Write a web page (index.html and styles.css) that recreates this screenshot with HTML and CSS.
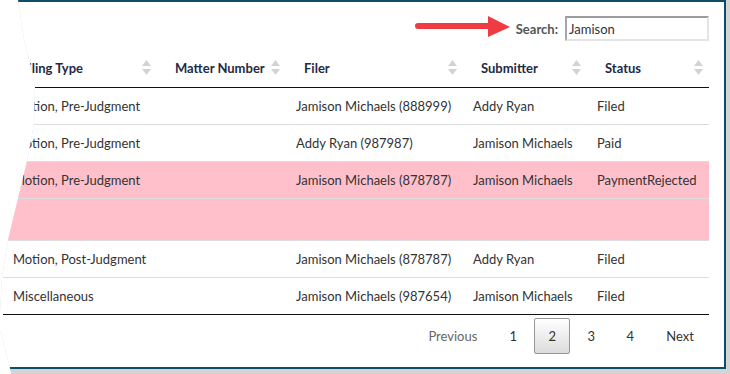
FILE: index.html
```html
<!DOCTYPE html>
<html lang="en">
<head>
    <meta charset="UTF-8">
    <meta name="viewport" content="width=device-width, initial-scale=1.0">
    <title>Filings</title>
    <link rel="stylesheet" href="styles.css">
</head>
<body>
    <div class="shot">
        <div class="frame">
            <div class="search-bar">
                <svg class="arrow" width="96" height="24" viewBox="0 0 96 24">
                    <line x1="3" y1="10" x2="76" y2="10" stroke="#ef3b42" stroke-width="6" stroke-linecap="round"/>
                    <polygon points="73,0 95,11 73,21" fill="#ef3b42"/>
                </svg>
                <label for="search">Search:</label>
                <input type="text" id="search" value="Jamison">
            </div>

            <table class="grid">
                <colgroup>
                    <col style="width: 154px">
                    <col style="width: 129px">
                    <col style="width: 177px">
                    <col style="width: 124px">
                    <col style="width: 122px">
                </colgroup>
                <thead>
                    <tr>
                        <th>Filing Type<svg class="sort" width="9" height="16" viewBox="0 0 9 16"><polygon points="0,6 4.5,0 9,6"/><polygon points="0,9 9,9 4.5,15"/></svg></th>
                        <th>Matter Number<svg class="sort" width="9" height="16" viewBox="0 0 9 16"><polygon points="0,6 4.5,0 9,6"/><polygon points="0,9 9,9 4.5,15"/></svg></th>
                        <th>Filer<svg class="sort" width="9" height="16" viewBox="0 0 9 16"><polygon points="0,6 4.5,0 9,6"/><polygon points="0,9 9,9 4.5,15"/></svg></th>
                        <th>Submitter<svg class="sort" width="9" height="16" viewBox="0 0 9 16"><polygon points="0,6 4.5,0 9,6"/><polygon points="0,9 9,9 4.5,15"/></svg></th>
                        <th>Status<svg class="sort" width="9" height="16" viewBox="0 0 9 16"><polygon points="0,6 4.5,0 9,6"/><polygon points="0,9 9,9 4.5,15"/></svg></th>
                    </tr>
                </thead>
                <tbody>
                    <tr>
                        <td>Motion, Pre-Judgment</td>
                        <td></td>
                        <td>Jamison Michaels (888999)</td>
                        <td>Addy Ryan</td>
                        <td>Filed</td>
                    </tr>
                    <tr>
                        <td>Motion, Pre-Judgment</td>
                        <td></td>
                        <td>Addy Ryan (987987)</td>
                        <td>Jamison Michaels</td>
                        <td>Paid</td>
                    </tr>
                    <tr class="rejected">
                        <td>Motion, Pre-Judgment</td>
                        <td></td>
                        <td>Jamison Michaels (878787)</td>
                        <td>Jamison Michaels</td>
                        <td>PaymentRejected</td>
                    </tr>
                    <tr class="rejected detail">
                        <td colspan="5"></td>
                    </tr>
                    <tr>
                        <td>Motion, Post-Judgment</td>
                        <td></td>
                        <td>Jamison Michaels (878787)</td>
                        <td>Addy Ryan</td>
                        <td>Filed</td>
                    </tr>
                    <tr class="last">
                        <td>Miscellaneous</td>
                        <td></td>
                        <td>Jamison Michaels (987654)</td>
                        <td>Jamison Michaels</td>
                        <td>Filed</td>
                    </tr>
                </tbody>
            </table>

            <div class="pager">
                <a class="page-btn wide disabled">Previous</a>
                <a class="page-btn">1</a>
                <a class="page-btn current">2</a>
                <a class="page-btn">3</a>
                <a class="page-btn">4</a>
                <a class="page-btn wide">Next</a>
            </div>
        </div>
    </div>
</body>
</html>
```

FILE: styles.css
```css
body {
    margin: 0;
    background: #fff;
    font-family: Lato, "Open Sans", sans-serif;
    font-size: 13px;
    color: #333;
}
.shot {
    width: 730px;
    height: 374px;
    background: #d4d4d4;
    clip-path: polygon(18px 0, 100% 0, 100% 100%, 11px 100%, 10px 368px, 0 330px, 0 313px, 2px 277px, 8px 240px, 27px 161px, 34px 124px, 35px 86px, 31px 67px, 24px 40px);
}
.frame {
    width: 724px;
    height: 365px;
    box-sizing: content-box;
    background: #fff;
    border-top: 2px solid #0e4c69;
    border-right: 2px solid #0e4c69;
    border-bottom: 2px solid #0e4c69;
    padding: 0;
}
.search-bar {
    display: flex;
    justify-content: flex-end;
    align-items: center;
    height: 25px;
    padding: 14px 15px 0 0;
}
.arrow {
    margin-right: 5px;
    margin-top: -1px;
}
.search-bar label {
    font-weight: 700;
    color: #555;
    margin-right: 7px;
}
.search-bar input {
    width: 144px;
    height: 25px;
    box-sizing: border-box;
    padding: 0 2px;
    border: 2px solid #e4e4e4;
    border-top-color: #9c9c9c;
    border-left-color: #a6a6a6;
    font-family: inherit;
    font-size: 13px;
    color: #333;
    outline: none;
}
.grid {
    margin: 8px 0 0 3px;
    width: 706px;
    table-layout: fixed;
    border-collapse: collapse;
}
.grid th {
    height: 38px;
    padding: 0 10px 0 18px;
    text-align: left;
    font-weight: 700;
    color: #1f2a44;
    border-bottom: 1px solid #111;
    white-space: nowrap;
}
.sort {
    float: right;
    margin-right: -4px;
    fill: #d3d3d3;
}
.grid td {
    height: 36px;
    padding: 0 10px;
    border-bottom: 1px solid #ddd;
    white-space: nowrap;
    overflow: hidden;
}
.grid tr.rejected td {
    background: #ffc0cb;
}
.grid tr.detail td {
    height: 41px;
}
.grid tr.last td {
    border-bottom: 1px solid #111;
}
.pager {
    display: flex;
    justify-content: flex-end;
    padding: 3px 15px 0 0;
}
.page-btn {
    box-sizing: border-box;
    min-width: 36px;
    height: 36px;
    margin-left: 3px;
    padding: 0;
    display: flex;
    align-items: center;
    justify-content: center;
    border: 1px solid transparent;
    border-radius: 2px;
    color: #333;
    cursor: pointer;
}
.page-btn.wide {
    padding: 0 14px;
}
.page-btn.disabled {
    color: #666;
    cursor: default;
}
.page-btn.current {
    border-color: #979797;
    background: linear-gradient(to bottom, #fff 0%, #dcdcdc 100%);
}
```
